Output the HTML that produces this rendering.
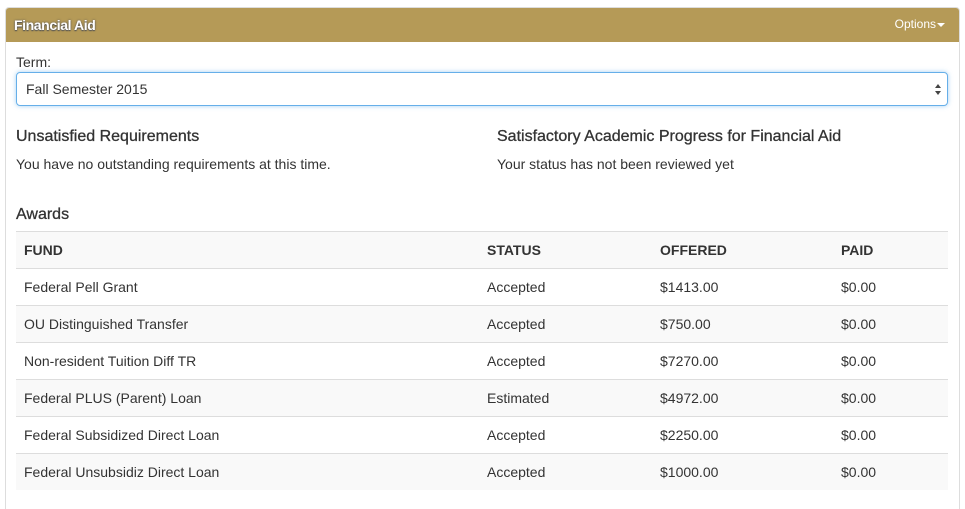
<!DOCTYPE html>
<html style="width:965px;height:509px;overflow:hidden"><head><style>
body{margin:0;background:#fff;font-family:"Liberation Sans",Arial,sans-serif;color:#333;font-size:14px;width:965px;height:509px;overflow:hidden;position:relative}
.panel{position:absolute;left:5px;top:7px;width:953px;height:510px;border:1px solid #ddd;border-radius:4px}
.hd{position:absolute;left:0;top:0;right:0;height:34px;background:#b59a57;border-radius:3px 3px 0 0}
.hd .t{position:absolute;left:8px;top:9px;color:#fff;font-weight:bold;font-size:14px;text-shadow:0 0 2px #555,0 1px 1px #555;letter-spacing:-0.4px}
.hd .o{position:absolute;right:14px;top:9px;color:#fff;font-size:12px}
.tri{display:inline-block;width:0;height:0;border-left:4px solid transparent;border-right:4px solid transparent;border-top:4px solid #fff;vertical-align:middle;margin-left:1px}
.abs{position:absolute}
.sel{position:absolute;left:16px;top:72px;width:930px;height:32px;border:1px solid #66afe9;border-radius:4px;box-shadow:0 0 5px rgba(102,175,233,.6)}
h3{margin:0;font-size:16px;font-weight:normal;position:absolute;color:#333;-webkit-text-stroke:0.3px #333}
table{position:absolute;left:16px;top:231px;width:932px;border-collapse:collapse}
td,th{height:36px;padding:0 8px;text-align:left;border-top:1px solid #ddd;font-size:14px}
th{font-weight:bold}
tr.g{background:#f9f9f9}
</style></head><body>
<div class="panel"><div class="hd"><span class="t">Financial Aid</span><span class="o">Options<span class="tri"></span></span></div></div>
<div class="abs" style="left:16px;top:54px">Term:</div>
<div class="sel"><span class="abs" style="left:9px;top:8px">Fall Semester 2015</span>
<svg class="abs" style="right:5px;top:10px" width="8" height="13"><path d="M1 5L4 1L7 5Z M1 8L4 12L7 8Z" fill="#444"/></svg></div>
<h3 style="left:16px;top:128px">Unsatisfied Requirements</h3>
<div class="abs" style="left:16px;top:156px">You have no outstanding requirements at this time.</div>
<h3 style="left:497px;top:128px">Satisfactory Academic Progress for Financial Aid</h3>
<div class="abs" style="left:497px;top:156px">Your status has not been reviewed yet</div>
<h3 style="left:16px;top:206px">Awards</h3>
<table>
<tr class="g"><th style="width:447px">FUND</th><th style="width:157px">STATUS</th><th style="width:165px">OFFERED</th><th>PAID</th></tr>
<tr><td>Federal Pell Grant</td><td>Accepted</td><td>$1413.00</td><td>$0.00</td></tr>
<tr class="g"><td>OU Distinguished Transfer</td><td>Accepted</td><td>$750.00</td><td>$0.00</td></tr>
<tr><td>Non-resident Tuition Diff TR</td><td>Accepted</td><td>$7270.00</td><td>$0.00</td></tr>
<tr class="g"><td>Federal PLUS (Parent) Loan</td><td>Estimated</td><td>$4972.00</td><td>$0.00</td></tr>
<tr><td>Federal Subsidized Direct Loan</td><td>Accepted</td><td>$2250.00</td><td>$0.00</td></tr>
<tr class="g"><td>Federal Unsubsidiz Direct Loan</td><td>Accepted</td><td>$1000.00</td><td>$0.00</td></tr>
</table>
</body></html>
